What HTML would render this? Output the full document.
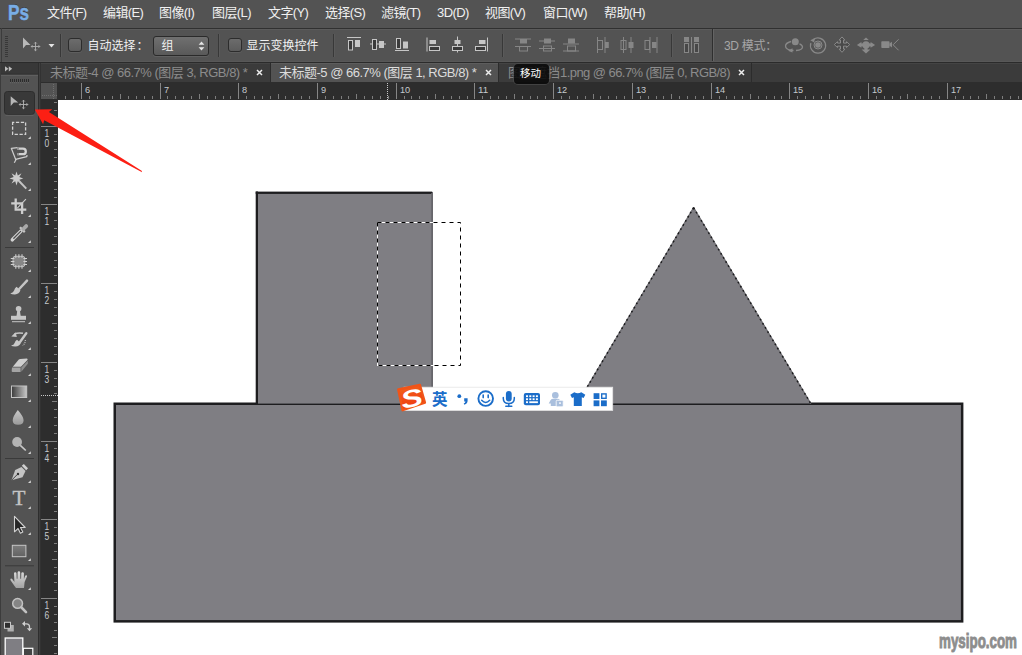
<!DOCTYPE html>
<html lang="zh-CN">
<head>
<meta charset="utf-8">
<title>Photoshop</title>
<style>
html,body{margin:0;padding:0;overflow:hidden;}
body{width:1022px;height:655px;overflow:hidden;position:relative;background:#535353;
 font-family:"Liberation Sans","Noto Sans CJK SC",sans-serif;color:#dcdcdc;}
.abs{position:absolute;}
svg{position:absolute;overflow:visible;}
#menubar{left:0;top:0;width:1022px;height:28px;background:#535353;}
#menubar .mi{position:absolute;top:0;height:27px;line-height:26px;font-size:13px;color:#f0f0f0;white-space:nowrap;letter-spacing:-0.6px;}
#ps{position:absolute;left:7.700px;top:-2.400px;font-size:22px;font-weight:bold;color:#78aee6;-webkit-text-stroke:0.500px #78aee6;line-height:30px;transform:scaleX(0.780);transform-origin:0 0;text-shadow:0 -1px 0 rgba(40,40,40,0.550);}
#optbar{left:0;top:28px;width:1022px;height:35px;background:#535353;}
.lbl{position:absolute;font-size:12px;line-height:16px;color:#f0f0f0;white-space:nowrap;letter-spacing:0;}
.cb{position:absolute;width:12px;height:12px;border:1px solid #2c2c2c;border-radius:3px;background:linear-gradient(#6c6c6c,#5c5c5c);box-shadow:0 1px 0 #5e5e5e;}
.vsep{position:absolute;width:1px;background:#383838;box-shadow:1px 0 0 #5a5a5a;}
#tabbar{left:41px;top:63px;width:981px;height:19px;background:#3b3b3b;box-shadow:inset 0 1px 0 #444;}
.tab{position:absolute;top:0;height:19px;line-height:19px;font-size:13px;color:#8c8c8c;white-space:nowrap;letter-spacing:-0.5px;background:#3b3b3b;box-shadow:inset 0 1px 0 #444;border-right:1px solid #2c2c2c;}
.tab.act{background:#535353;color:#dcdcdc;box-shadow:inset 0 1px 0 #5d5d5d;}
.tab .tt{position:absolute;left:9px;top:0;}
.tab svg.x{top:6px;stroke:#ececec;stroke-width:1.500;fill:none;}
#tip{left:514px;top:64px;width:35px;height:20px;background:rgba(8,8,8,0.860);border-radius:4px;box-shadow:0 0 0 1px rgba(75,75,75,0.700);color:#fff;font-size:10.500px;line-height:19px;text-align:center;text-indent:-2px;z-index:5;}
#hruler{left:41px;top:82px;width:981px;height:18px;background:#2d2d2d;overflow:hidden;}
#vruler{left:41px;top:99px;width:17px;height:556px;background:#2d2d2d;overflow:hidden;}
#canvas{left:58px;top:100px;width:964px;height:555px;background:#fff;overflow:hidden;}
#toolbar{left:0;top:63px;width:41px;height:592px;background:#535353;}
.rnv{font-family:"Liberation Sans",sans-serif;font-size:10px;fill:#c6cace;}
.rnum{font-family:"Liberation Sans",sans-serif;font-size:9.300px;fill:#c6cace;}
</style>
</head>
<body>
<!-- MENU BAR -->
<div id="menubar" class="abs">
  <div id="ps">Ps</div>
  <div class="mi" style="left:47px">文件(F)</div>
  <div class="mi" style="left:103px">编辑(E)</div>
  <div class="mi" style="left:159px">图像(I)</div>
  <div class="mi" style="left:212px">图层(L)</div>
  <div class="mi" style="left:268px">文字(Y)</div>
  <div class="mi" style="left:325px">选择(S)</div>
  <div class="mi" style="left:381px">滤镜(T)</div>
  <div class="mi" style="left:437px">3D(D)</div>
  <div class="mi" style="left:485px">视图(V)</div>
  <div class="mi" style="left:543px">窗口(W)</div>
  <div class="mi" style="left:604px">帮助(H)</div>
</div>
<!-- OPTIONS BAR -->
<div id="optbar" class="abs">
  <div class="abs" style="left:0;top:0;width:1022px;height:1px;background:#303030"></div><div class="abs" style="left:2px;top:1px;width:1020px;height:1px;background:#5b5b5b"></div>
  <div class="abs" style="left:1px;top:0;width:1px;height:34px;background:#3c3c3c"></div>
  <div class="abs" style="left:2px;top:33px;width:1020px;height:1px;background:#585858"></div><div class="abs" style="left:0;top:34px;width:1022px;height:1px;background:#2b2b2b"></div>
  <div class="cb" style="left:68px;top:10px"></div>
  <div class="lbl" style="left:87.500px;top:10px">自动选择<span style="margin-left:1px">：</span></div>
  <div class="abs" style="left:153px;top:8px;width:54px;height:18px;border:1px solid #2a2a2a;border-radius:3px;background:linear-gradient(#707070,#595959);box-shadow:0 1px 0 #606060;"></div>
  <div class="lbl" style="left:161.500px;top:10px">组</div>
  <div class="cb" style="left:228px;top:10px"></div>
  <div class="lbl" style="left:246.500px;top:10px">显示变换控件</div>
  <div class="lbl" style="left:724px;top:10px;color:#a6a6a6;font-size:12px;letter-spacing:-0.3px">3D 模式：</div>
  <div class="vsep" style="left:60px;top:6px;height:23px"></div>
  <div class="vsep" style="left:218px;top:6px;height:23px"></div>
  <div class="vsep" style="left:333px;top:6px;height:23px"></div>
  <div class="vsep" style="left:502px;top:6px;height:23px"></div>
  <div class="vsep" style="left:671px;top:6px;height:23px"></div>
  <div class="vsep" style="left:712px;top:1px;height:32px;background:#2f2f2f;box-shadow:1px 0 0 #646464"></div>
  <svg width="1022" height="35" viewBox="0 28 1022 35" style="left:0;top:0">
    <!-- gripper -->
    <g stroke="#383838" stroke-width="1">
      <path d="M5 36.5h3M5 38.5h3M5 40.5h3M5 42.5h3M5 44.5h3M5 46.5h3M5 48.5h3M5 50.5h3M5 52.5h3M5 54.5h3M5 56.5h3"/>
    </g>
    <!-- move tool icon -->
    <path d="M23 37.5V48.5L26 45H30.5Z" fill="#b9b9b9"/>
    <g fill="none" stroke="#b2b2b2" stroke-width="0.900">
      <path d="M35.5 42.2v8.600M31.2 46.5h8.600"/>
      <path d="M34.2 43.5l1.300-1.300 1.300 1.300M34.200 49.500l1.300 1.300 1.300-1.300M32.500 45.200l-1.300 1.300 1.300 1.300M38.500 45.200l1.300 1.300-1.300 1.300" stroke-width="0.900"/>
    </g>
    <path d="M48.5 44h6l-3 3.6z" fill="#e4e4e4"/>
    <!-- select arrows -->
    <path d="M198.6 44.8l2.9-3.3 2.9 3.3zM198.6 47.2l2.9 3.3 2.9-3.3z" fill="#e6e6e6"/>
    <!-- align icons -->
    <g fill="#c6c6c6" stroke="none">
      <rect x="347" y="37" width="14" height="1"/>
      <rect x="355" y="40" width="5" height="7"/>
      <rect x="370" y="43.5" width="16" height="1"/>
      <rect x="379" y="41" width="5" height="7"/>
      <rect x="395" y="50" width="14" height="1"/>
      <rect x="403" y="41.5" width="5" height="7"/>
      <rect x="426.5" y="37.5" width="1" height="14"/>
      <rect x="429.5" y="40" width="6.5" height="4"/>
      <rect x="457" y="36.5" width="1" height="16"/>
      <rect x="454.5" y="40" width="6" height="4"/>
      <rect x="487" y="37.5" width="1" height="14"/>
      <rect x="479" y="40" width="6.5" height="4"/>
    </g>
    <g fill="#3a3a3a" stroke="#c6c6c6" stroke-width="1">
      <rect x="348.5" y="40.500" width="4" height="9.5"/>
      <rect x="372.500" y="39.500" width="4" height="10"/>
      <rect x="396.500" y="38.500" width="4" height="10"/>
      <rect x="429.500" y="46.500" width="10" height="4"/>
      <rect x="452.500" y="46.500" width="10" height="4"/>
      <rect x="475.500" y="46.500" width="10" height="4"/>
    </g>
    <!-- distribute icons (disabled) -->
    <g fill="#868686" stroke="none">
      <rect x="515" y="38.5" width="16" height="1"/>
      <rect x="520" y="39" width="7" height="4.5"/>
      <rect x="515" y="46" width="16" height="1"/>
      <rect x="539" y="40.5" width="16" height="1"/>
      <rect x="544" y="38.5" width="7" height="5"/>
      <rect x="539" y="48" width="16" height="1"/>
      <rect x="563" y="43.5" width="16" height="1"/>
      <rect x="568" y="38.5" width="7" height="5"/>
      <rect x="563" y="50.5" width="16" height="1"/>
      <rect x="597" y="37" width="1" height="16"/>
      <rect x="604.5" y="37" width="1" height="16"/>
      <rect x="605" y="42" width="3.800" height="6"/>
      <rect x="623" y="37" width="1" height="16"/>
      <rect x="630.5" y="37" width="1" height="16"/>
      <rect x="628.5" y="42" width="5" height="6"/>
      <rect x="649.5" y="37" width="1" height="16"/>
      <rect x="656.5" y="37" width="1" height="16"/>
      <rect x="652" y="42" width="4.500" height="6"/>
      <rect x="684" y="37" width="5" height="5"/>
      <rect x="694" y="37" width="5" height="5"/>
      <rect x="691" y="37" width="1" height="16"/>
    </g>
    <g fill="none" stroke="#868686" stroke-width="1">
      <rect x="519.500" y="46.500" width="8" height="4.500"/>
      <rect x="543.500" y="46" width="8" height="5"/>
      <rect x="567.500" y="46" width="8" height="5"/>
      <rect x="597.500" y="40.500" width="5" height="9"/>
      <rect x="621" y="40.500" width="5" height="9"/>
      <rect x="645" y="40.500" width="4.500" height="9"/>
      <rect x="684.500" y="43.500" width="4" height="9" fill="#474747"/>
      <rect x="694.500" y="43.500" width="4" height="9" fill="#474747"/>
    </g>
    <!-- 3D mode icons (disabled) -->
    <g fill="none" stroke="#898989" stroke-width="1.300">
      <path d="M791 41.500q-5.500 1.500-5.500 4.500 0 4 8 4.500M796 50.500q6.500-.5 6.500-3.500 0-2-3-3.200"/>
      <path d="M813.500 39.500a7.600 7.600 0 1 1-2.600 3.500" stroke-width="1.200"/>
      <circle cx="818" cy="45" r="4" stroke-width="1"/>
      <path d="M842.0 36.9L844.9 40.1L843.5 40.1L843.5 43.1L846.5 43.1L846.5 41.7L849.7 44.6L846.5 47.5L846.5 46.1L843.5 46.1L843.5 49.1L844.9 49.1L842.0 52.3L839.1 49.1L840.5 49.1L840.5 46.1L837.5 46.1L837.5 47.5L834.3 44.6L837.5 41.7L837.5 43.1L840.5 43.1L840.5 40.1L839.1 40.1Z" stroke-width="1" fill="#494949" stroke-linejoin="round"/>
      <path d="M898.600 39.300l-5.500 5.500 5.500 5.500" stroke-width="1"/>
    </g>
    <g fill="#898989" stroke="none">
      <circle cx="795.300" cy="41.800" r="3.500"/>
      <path d="M788 50.800l4.500-2.600v4.300z"/>
      <path d="M810.300 40.300l4.700-2.300-.8 4.600z"/>
      <circle cx="818" cy="45" r="2.800"/>
      <circle cx="866" cy="44.900" r="3.600"/>
      <path d="M866 37.500l2.800 2.600h-5.600zM866 53.600l4.400-4h-8.800zM856.900 44.900l4.500-2.900v5.800zM875.100 44.900l-4.500-2.900v5.800z"/>
      <rect x="861" y="43.400" width="10" height="3"/>
      <rect x="864.500" y="46" width="3" height="4"/>
      <rect x="881.300" y="41.200" width="8.200" height="6.800" rx="0.800"/>
      <path d="M889.500 43.600l2.500-1.800v5.800l-2.500-1.800z"/>
    </g>
  </svg>
</div>
<!-- TAB BAR -->
<div id="tabbar" class="abs">
  <div class="tab" style="left:0;width:229px;"><span class="tt" style="left:9px">未标题-4 @ 66.7% (图层 3, RGB/8) *</span><svg class="x" style="left:215px" width="7" height="7" viewBox="0 0 7 7"><path d="M1 1L6 6M6 1L1 6"/></svg></div>
  <div class="tab act" style="left:230px;width:227px;"><span class="tt" style="left:8px">未标题-5 @ 66.7% (图层 1, RGB/8) *</span><svg class="x" style="left:214px" width="7" height="7" viewBox="0 0 7 7"><path d="M1 1L6 6M6 1L1 6"/></svg></div>
  <div class="tab" style="left:458px;width:252px;"><span class="tt" style="left:9px;letter-spacing:-0.560px"><span style="letter-spacing:0">图层遮挡</span>1.png @ 66.7% (图层 0, RGB/8)</span><svg class="x" style="left:239px" width="7" height="7" viewBox="0 0 7 7"><path d="M1 1L6 6M6 1L1 6"/></svg></div>
</div>
<div class="abs" id="tip">移动</div>
<!-- RULERS -->
<div id="hruler" class="abs"><svg width="981" height="18" viewBox="41 82 981 18" style="left:0;top:0">
<text class="rnum" x="85" y="92.900" textLength="5.1" lengthAdjust="spacingAndGlyphs">6</text>
<text class="rnum" x="164" y="92.900" textLength="5.1" lengthAdjust="spacingAndGlyphs">7</text>
<text class="rnum" x="242" y="92.900" textLength="5.1" lengthAdjust="spacingAndGlyphs">8</text>
<text class="rnum" x="321" y="92.900" textLength="5.1" lengthAdjust="spacingAndGlyphs">9</text>
<text class="rnum" x="400" y="92.900" textLength="10.2" lengthAdjust="spacingAndGlyphs">10</text>
<text class="rnum" x="478" y="92.900" textLength="10.2" lengthAdjust="spacingAndGlyphs">11</text>
<text class="rnum" x="557" y="92.900" textLength="10.2" lengthAdjust="spacingAndGlyphs">12</text>
<text class="rnum" x="636" y="92.900" textLength="10.2" lengthAdjust="spacingAndGlyphs">13</text>
<text class="rnum" x="715" y="92.900" textLength="10.2" lengthAdjust="spacingAndGlyphs">14</text>
<text class="rnum" x="793" y="92.900" textLength="10.2" lengthAdjust="spacingAndGlyphs">15</text>
<text class="rnum" x="872" y="92.900" textLength="10.2" lengthAdjust="spacingAndGlyphs">16</text>
<text class="rnum" x="951" y="92.900" textLength="10.2" lengthAdjust="spacingAndGlyphs">17</text>
<rect x="65" y="96" width="1" height="3" fill="#7e7e7e"/>
<rect x="73" y="96" width="1" height="3" fill="#7e7e7e"/>
<rect x="81" y="83" width="1" height="16" fill="#868686"/>
<rect x="89" y="96" width="1" height="3" fill="#7e7e7e"/>
<rect x="97" y="96" width="1" height="3" fill="#7e7e7e"/>
<rect x="104" y="96" width="1" height="3" fill="#7e7e7e"/>
<rect x="112" y="96" width="1" height="3" fill="#7e7e7e"/>
<rect x="120" y="94" width="1" height="5" fill="#7e7e7e"/>
<rect x="128" y="96" width="1" height="3" fill="#7e7e7e"/>
<rect x="136" y="96" width="1" height="3" fill="#7e7e7e"/>
<rect x="144" y="96" width="1" height="3" fill="#7e7e7e"/>
<rect x="152" y="96" width="1" height="3" fill="#7e7e7e"/>
<rect x="160" y="83" width="1" height="16" fill="#868686"/>
<rect x="167" y="96" width="1" height="3" fill="#7e7e7e"/>
<rect x="175" y="96" width="1" height="3" fill="#7e7e7e"/>
<rect x="183" y="96" width="1" height="3" fill="#7e7e7e"/>
<rect x="191" y="96" width="1" height="3" fill="#7e7e7e"/>
<rect x="199" y="94" width="1" height="5" fill="#7e7e7e"/>
<rect x="207" y="96" width="1" height="3" fill="#7e7e7e"/>
<rect x="215" y="96" width="1" height="3" fill="#7e7e7e"/>
<rect x="223" y="96" width="1" height="3" fill="#7e7e7e"/>
<rect x="230" y="96" width="1" height="3" fill="#7e7e7e"/>
<rect x="238" y="83" width="1" height="16" fill="#868686"/>
<rect x="246" y="96" width="1" height="3" fill="#7e7e7e"/>
<rect x="254" y="96" width="1" height="3" fill="#7e7e7e"/>
<rect x="262" y="96" width="1" height="3" fill="#7e7e7e"/>
<rect x="270" y="96" width="1" height="3" fill="#7e7e7e"/>
<rect x="278" y="94" width="1" height="5" fill="#7e7e7e"/>
<rect x="285" y="96" width="1" height="3" fill="#7e7e7e"/>
<rect x="293" y="96" width="1" height="3" fill="#7e7e7e"/>
<rect x="301" y="96" width="1" height="3" fill="#7e7e7e"/>
<rect x="309" y="96" width="1" height="3" fill="#7e7e7e"/>
<rect x="317" y="83" width="1" height="16" fill="#868686"/>
<rect x="325" y="96" width="1" height="3" fill="#7e7e7e"/>
<rect x="333" y="96" width="1" height="3" fill="#7e7e7e"/>
<rect x="341" y="96" width="1" height="3" fill="#7e7e7e"/>
<rect x="348" y="96" width="1" height="3" fill="#7e7e7e"/>
<rect x="356" y="94" width="1" height="5" fill="#7e7e7e"/>
<rect x="364" y="96" width="1" height="3" fill="#7e7e7e"/>
<rect x="372" y="96" width="1" height="3" fill="#7e7e7e"/>
<rect x="380" y="96" width="1" height="3" fill="#7e7e7e"/>
<rect x="388" y="96" width="1" height="3" fill="#7e7e7e"/>
<rect x="396" y="83" width="1" height="16" fill="#868686"/>
<rect x="404" y="96" width="1" height="3" fill="#7e7e7e"/>
<rect x="411" y="96" width="1" height="3" fill="#7e7e7e"/>
<rect x="419" y="96" width="1" height="3" fill="#7e7e7e"/>
<rect x="427" y="96" width="1" height="3" fill="#7e7e7e"/>
<rect x="435" y="94" width="1" height="5" fill="#7e7e7e"/>
<rect x="443" y="96" width="1" height="3" fill="#7e7e7e"/>
<rect x="451" y="96" width="1" height="3" fill="#7e7e7e"/>
<rect x="459" y="96" width="1" height="3" fill="#7e7e7e"/>
<rect x="467" y="96" width="1" height="3" fill="#7e7e7e"/>
<rect x="474" y="83" width="1" height="16" fill="#868686"/>
<rect x="482" y="96" width="1" height="3" fill="#7e7e7e"/>
<rect x="490" y="96" width="1" height="3" fill="#7e7e7e"/>
<rect x="498" y="96" width="1" height="3" fill="#7e7e7e"/>
<rect x="506" y="96" width="1" height="3" fill="#7e7e7e"/>
<rect x="514" y="94" width="1" height="5" fill="#7e7e7e"/>
<rect x="522" y="96" width="1" height="3" fill="#7e7e7e"/>
<rect x="530" y="96" width="1" height="3" fill="#7e7e7e"/>
<rect x="537" y="96" width="1" height="3" fill="#7e7e7e"/>
<rect x="545" y="96" width="1" height="3" fill="#7e7e7e"/>
<rect x="553" y="83" width="1" height="16" fill="#868686"/>
<rect x="561" y="96" width="1" height="3" fill="#7e7e7e"/>
<rect x="569" y="96" width="1" height="3" fill="#7e7e7e"/>
<rect x="577" y="96" width="1" height="3" fill="#7e7e7e"/>
<rect x="585" y="96" width="1" height="3" fill="#7e7e7e"/>
<rect x="593" y="94" width="1" height="5" fill="#7e7e7e"/>
<rect x="600" y="96" width="1" height="3" fill="#7e7e7e"/>
<rect x="608" y="96" width="1" height="3" fill="#7e7e7e"/>
<rect x="616" y="96" width="1" height="3" fill="#7e7e7e"/>
<rect x="624" y="96" width="1" height="3" fill="#7e7e7e"/>
<rect x="632" y="83" width="1" height="16" fill="#868686"/>
<rect x="640" y="96" width="1" height="3" fill="#7e7e7e"/>
<rect x="648" y="96" width="1" height="3" fill="#7e7e7e"/>
<rect x="656" y="96" width="1" height="3" fill="#7e7e7e"/>
<rect x="663" y="96" width="1" height="3" fill="#7e7e7e"/>
<rect x="671" y="94" width="1" height="5" fill="#7e7e7e"/>
<rect x="679" y="96" width="1" height="3" fill="#7e7e7e"/>
<rect x="687" y="96" width="1" height="3" fill="#7e7e7e"/>
<rect x="695" y="96" width="1" height="3" fill="#7e7e7e"/>
<rect x="703" y="96" width="1" height="3" fill="#7e7e7e"/>
<rect x="711" y="83" width="1" height="16" fill="#868686"/>
<rect x="719" y="96" width="1" height="3" fill="#7e7e7e"/>
<rect x="726" y="96" width="1" height="3" fill="#7e7e7e"/>
<rect x="734" y="96" width="1" height="3" fill="#7e7e7e"/>
<rect x="742" y="96" width="1" height="3" fill="#7e7e7e"/>
<rect x="750" y="94" width="1" height="5" fill="#7e7e7e"/>
<rect x="758" y="96" width="1" height="3" fill="#7e7e7e"/>
<rect x="766" y="96" width="1" height="3" fill="#7e7e7e"/>
<rect x="774" y="96" width="1" height="3" fill="#7e7e7e"/>
<rect x="781" y="96" width="1" height="3" fill="#7e7e7e"/>
<rect x="789" y="83" width="1" height="16" fill="#868686"/>
<rect x="797" y="96" width="1" height="3" fill="#7e7e7e"/>
<rect x="805" y="96" width="1" height="3" fill="#7e7e7e"/>
<rect x="813" y="96" width="1" height="3" fill="#7e7e7e"/>
<rect x="821" y="96" width="1" height="3" fill="#7e7e7e"/>
<rect x="829" y="94" width="1" height="5" fill="#7e7e7e"/>
<rect x="837" y="96" width="1" height="3" fill="#7e7e7e"/>
<rect x="844" y="96" width="1" height="3" fill="#7e7e7e"/>
<rect x="852" y="96" width="1" height="3" fill="#7e7e7e"/>
<rect x="860" y="96" width="1" height="3" fill="#7e7e7e"/>
<rect x="868" y="83" width="1" height="16" fill="#868686"/>
<rect x="876" y="96" width="1" height="3" fill="#7e7e7e"/>
<rect x="884" y="96" width="1" height="3" fill="#7e7e7e"/>
<rect x="892" y="96" width="1" height="3" fill="#7e7e7e"/>
<rect x="900" y="96" width="1" height="3" fill="#7e7e7e"/>
<rect x="907" y="94" width="1" height="5" fill="#7e7e7e"/>
<rect x="915" y="96" width="1" height="3" fill="#7e7e7e"/>
<rect x="923" y="96" width="1" height="3" fill="#7e7e7e"/>
<rect x="931" y="96" width="1" height="3" fill="#7e7e7e"/>
<rect x="939" y="96" width="1" height="3" fill="#7e7e7e"/>
<rect x="947" y="83" width="1" height="16" fill="#868686"/>
<rect x="955" y="96" width="1" height="3" fill="#7e7e7e"/>
<rect x="963" y="96" width="1" height="3" fill="#7e7e7e"/>
<rect x="970" y="96" width="1" height="3" fill="#7e7e7e"/>
<rect x="978" y="96" width="1" height="3" fill="#7e7e7e"/>
<rect x="986" y="94" width="1" height="5" fill="#7e7e7e"/>
<rect x="994" y="96" width="1" height="3" fill="#7e7e7e"/>
<rect x="1002" y="96" width="1" height="3" fill="#7e7e7e"/>
<rect x="1010" y="96" width="1" height="3" fill="#7e7e7e"/>
<rect x="1018" y="96" width="1" height="3" fill="#7e7e7e"/>
<rect x="41" y="83" width="16" height="16" fill="#535353"/>
<path d="M42 95.500h15M53.500 84v15" stroke="#6e6e6e" stroke-width="1" stroke-dasharray="1 1" fill="none"/>
<path d="M387.500 83v17" stroke="#c8c8c8" stroke-width="1" stroke-dasharray="1 1" fill="none"/>
</svg></div>
<div id="vruler" class="abs"><svg width="17" height="556" viewBox="41 99 17 556" style="left:0;top:0">
<text class="rnv" x="44.500" y="137.4" textLength="4.700" lengthAdjust="spacingAndGlyphs">1</text>
<text class="rnv" x="44.500" y="147.4" textLength="4.700" lengthAdjust="spacingAndGlyphs">0</text>
<text class="rnv" x="44.500" y="215.4" textLength="4.700" lengthAdjust="spacingAndGlyphs">1</text>
<text class="rnv" x="44.500" y="225.4" textLength="4.700" lengthAdjust="spacingAndGlyphs">1</text>
<text class="rnv" x="44.500" y="294.4" textLength="4.700" lengthAdjust="spacingAndGlyphs">1</text>
<text class="rnv" x="44.500" y="304.4" textLength="4.700" lengthAdjust="spacingAndGlyphs">2</text>
<text class="rnv" x="44.500" y="373.4" textLength="4.700" lengthAdjust="spacingAndGlyphs">1</text>
<text class="rnv" x="44.500" y="383.4" textLength="4.700" lengthAdjust="spacingAndGlyphs">3</text>
<text class="rnv" x="44.500" y="452.4" textLength="4.700" lengthAdjust="spacingAndGlyphs">1</text>
<text class="rnv" x="44.500" y="462.4" textLength="4.700" lengthAdjust="spacingAndGlyphs">4</text>
<text class="rnv" x="44.500" y="530.4" textLength="4.700" lengthAdjust="spacingAndGlyphs">1</text>
<text class="rnv" x="44.500" y="540.4" textLength="4.700" lengthAdjust="spacingAndGlyphs">5</text>
<text class="rnv" x="44.500" y="609.4" textLength="4.700" lengthAdjust="spacingAndGlyphs">1</text>
<text class="rnv" x="44.500" y="619.4" textLength="4.700" lengthAdjust="spacingAndGlyphs">6</text>
<rect x="54" y="102" width="3" height="1" fill="#7e7e7e"/>
<rect x="54" y="110" width="3" height="1" fill="#7e7e7e"/>
<rect x="54" y="118" width="3" height="1" fill="#7e7e7e"/>
<rect x="41" y="126" width="16" height="1" fill="#868686"/>
<rect x="54" y="134" width="3" height="1" fill="#7e7e7e"/>
<rect x="54" y="141" width="3" height="1" fill="#7e7e7e"/>
<rect x="54" y="149" width="3" height="1" fill="#7e7e7e"/>
<rect x="54" y="157" width="3" height="1" fill="#7e7e7e"/>
<rect x="52" y="165" width="5" height="1" fill="#7e7e7e"/>
<rect x="54" y="173" width="3" height="1" fill="#7e7e7e"/>
<rect x="54" y="181" width="3" height="1" fill="#7e7e7e"/>
<rect x="54" y="189" width="3" height="1" fill="#7e7e7e"/>
<rect x="54" y="197" width="3" height="1" fill="#7e7e7e"/>
<rect x="41" y="204" width="16" height="1" fill="#868686"/>
<rect x="54" y="212" width="3" height="1" fill="#7e7e7e"/>
<rect x="54" y="220" width="3" height="1" fill="#7e7e7e"/>
<rect x="54" y="228" width="3" height="1" fill="#7e7e7e"/>
<rect x="54" y="236" width="3" height="1" fill="#7e7e7e"/>
<rect x="52" y="244" width="5" height="1" fill="#7e7e7e"/>
<rect x="54" y="252" width="3" height="1" fill="#7e7e7e"/>
<rect x="54" y="260" width="3" height="1" fill="#7e7e7e"/>
<rect x="54" y="267" width="3" height="1" fill="#7e7e7e"/>
<rect x="54" y="275" width="3" height="1" fill="#7e7e7e"/>
<rect x="41" y="283" width="16" height="1" fill="#868686"/>
<rect x="54" y="291" width="3" height="1" fill="#7e7e7e"/>
<rect x="54" y="299" width="3" height="1" fill="#7e7e7e"/>
<rect x="54" y="307" width="3" height="1" fill="#7e7e7e"/>
<rect x="54" y="315" width="3" height="1" fill="#7e7e7e"/>
<rect x="52" y="323" width="5" height="1" fill="#7e7e7e"/>
<rect x="54" y="330" width="3" height="1" fill="#7e7e7e"/>
<rect x="54" y="338" width="3" height="1" fill="#7e7e7e"/>
<rect x="54" y="346" width="3" height="1" fill="#7e7e7e"/>
<rect x="54" y="354" width="3" height="1" fill="#7e7e7e"/>
<rect x="41" y="362" width="16" height="1" fill="#868686"/>
<rect x="54" y="370" width="3" height="1" fill="#7e7e7e"/>
<rect x="54" y="378" width="3" height="1" fill="#7e7e7e"/>
<rect x="54" y="386" width="3" height="1" fill="#7e7e7e"/>
<rect x="54" y="393" width="3" height="1" fill="#7e7e7e"/>
<rect x="52" y="401" width="5" height="1" fill="#7e7e7e"/>
<rect x="54" y="409" width="3" height="1" fill="#7e7e7e"/>
<rect x="54" y="417" width="3" height="1" fill="#7e7e7e"/>
<rect x="54" y="425" width="3" height="1" fill="#7e7e7e"/>
<rect x="54" y="433" width="3" height="1" fill="#7e7e7e"/>
<rect x="41" y="441" width="16" height="1" fill="#868686"/>
<rect x="54" y="448" width="3" height="1" fill="#7e7e7e"/>
<rect x="54" y="456" width="3" height="1" fill="#7e7e7e"/>
<rect x="54" y="464" width="3" height="1" fill="#7e7e7e"/>
<rect x="54" y="472" width="3" height="1" fill="#7e7e7e"/>
<rect x="52" y="480" width="5" height="1" fill="#7e7e7e"/>
<rect x="54" y="488" width="3" height="1" fill="#7e7e7e"/>
<rect x="54" y="496" width="3" height="1" fill="#7e7e7e"/>
<rect x="54" y="504" width="3" height="1" fill="#7e7e7e"/>
<rect x="54" y="511" width="3" height="1" fill="#7e7e7e"/>
<rect x="41" y="519" width="16" height="1" fill="#868686"/>
<rect x="54" y="527" width="3" height="1" fill="#7e7e7e"/>
<rect x="54" y="535" width="3" height="1" fill="#7e7e7e"/>
<rect x="54" y="543" width="3" height="1" fill="#7e7e7e"/>
<rect x="54" y="551" width="3" height="1" fill="#7e7e7e"/>
<rect x="52" y="559" width="5" height="1" fill="#7e7e7e"/>
<rect x="54" y="567" width="3" height="1" fill="#7e7e7e"/>
<rect x="54" y="574" width="3" height="1" fill="#7e7e7e"/>
<rect x="54" y="582" width="3" height="1" fill="#7e7e7e"/>
<rect x="54" y="590" width="3" height="1" fill="#7e7e7e"/>
<rect x="41" y="598" width="16" height="1" fill="#868686"/>
<rect x="54" y="606" width="3" height="1" fill="#7e7e7e"/>
<rect x="54" y="614" width="3" height="1" fill="#7e7e7e"/>
<rect x="54" y="622" width="3" height="1" fill="#7e7e7e"/>
<rect x="54" y="630" width="3" height="1" fill="#7e7e7e"/>
<rect x="52" y="637" width="5" height="1" fill="#7e7e7e"/>
<rect x="54" y="645" width="3" height="1" fill="#7e7e7e"/>
<rect x="54" y="653" width="3" height="1" fill="#7e7e7e"/>
<path d="M41 395.500h17" stroke="#c8c8c8" stroke-width="1" stroke-dasharray="1 1" fill="none"/>
</svg></div>
<!-- CANVAS -->
<div id="canvas" class="abs">
<svg width="964" height="555" viewBox="58 100 964 555" style="left:0;top:0">
  <!-- big rectangle -->
  <rect x="114.750" y="403.750" width="847.400" height="217.600" fill="#7f7e83" stroke="#1d1d1f" stroke-width="2.500"/>
  <!-- tall rectangle -->
  <rect x="256" y="192" width="177" height="211.600" fill="#7f7e83"/>
  <rect x="255.700" y="191.500" width="2.300" height="212.500" fill="#1d1d1f"/>
  <rect x="255.700" y="191.600" width="176.500" height="2.300" fill="#1d1d1f"/>
  <rect x="431.200" y="193" width="1.800" height="210.600" fill="#67666b"/>
  <!-- triangle -->
  <path d="M693.600 207.700L810.800 403.600H577.400Z" fill="#7f7e83"/>
  <path d="M577.400 403.600L693.600 207.700L810.800 403.600" fill="none" stroke="#6f6e73" stroke-width="1.300" stroke-linejoin="round"/>
  <path d="M693.600 207.700L577.400 403.600M693.600 207.700L810.800 403.600" fill="none" stroke="#1a1a1c" stroke-width="1.500" stroke-dasharray="1.800 3"/>
  <!-- marquee selection -->
  <rect x="377.500" y="222.500" width="83" height="143" fill="none" stroke="#fff" stroke-width="1"/>
  <rect x="377.500" y="222.500" width="83" height="143" fill="none" stroke="#000" stroke-width="1" stroke-dasharray="4 4"/>
  <!-- watermark -->
  <text x="939" y="648" font-family="'Liberation Sans',sans-serif" font-weight="bold" font-size="21" fill="#8d8d8d" stroke="#8d8d8d" stroke-width="1" textLength="78" lengthAdjust="spacingAndGlyphs">mysipo.com</text>
</svg>
<!-- IME BAR -->
<svg width="230" height="40" viewBox="390 378 230 40" style="left:332px;top:278px">
  <defs><linearGradient id="sg" x1="0" y1="0" x2="0.300" y2="1"><stop offset="0" stop-color="#f4661c"/><stop offset="1" stop-color="#ee3a10"/></linearGradient></defs>
  <rect x="404" y="387.200" width="208.700" height="23.200" fill="#fff" stroke="#e4e4e4" stroke-width="0.800"/>
  <path d="M398.300 389.500L419.900 385L424.900 402.700L402.600 410.200Z" fill="url(#sg)" stroke="#f15418" stroke-width="2.400" stroke-linejoin="round"/>
  <g transform="rotate(-13 411.500 397.500)">
    <text x="400.500" y="406.800" font-family="'Liberation Sans',sans-serif" font-weight="bold" font-style="italic" font-size="24" fill="#fff" textLength="22" lengthAdjust="spacingAndGlyphs">S</text>
  </g>
  <text x="432" y="404.500" font-family="'Liberation Sans','Noto Sans CJK SC',sans-serif" font-weight="bold" font-size="15.500" fill="#1b6dc9">英</text>
  <circle cx="459.300" cy="396.200" r="1.900" fill="#1b6dc9"/>
  <path d="M464.200 398.200h3.400v2.600q0 2.800-3.200 4l-.7-1.200q1.600-.8 1.800-2.200h-1.300z" fill="#1b6dc9"/>
  <!-- smiley -->
  <g fill="none" stroke="#1b6dc9" stroke-width="1.700" stroke-linecap="round">
    <circle cx="485.700" cy="398.600" r="7.300" stroke-width="1.900"/>
    <path d="M483.200 395v2.600M488.200 395v2.600" stroke-width="1.600"/>
    <path d="M481.700 400.300q4 4.400 8 0" stroke-width="1.500"/>
  </g>
  <!-- mic -->
  <rect x="505.900" y="391" width="5.800" height="10.500" rx="2.900" fill="#1b6dc9"/>
  <path d="M503.300 397.500v1q0 5 5.500 5t5.500-5v-1M508.800 403.500v3M505.800 406.300h6" fill="none" stroke="#1b6dc9" stroke-width="1.500" stroke-linecap="round"/>
  <!-- keyboard -->
  <rect x="523.800" y="393" width="16.200" height="12.200" rx="2" fill="#1b6dc9"/>
  <g fill="#fff">
    <rect x="526" y="395.300" width="2" height="1.800"/><rect x="529.300" y="395.300" width="2" height="1.800"/><rect x="532.600" y="395.300" width="2" height="1.800"/><rect x="535.900" y="395.300" width="2" height="1.800"/>
    <rect x="526" y="398.300" width="2" height="1.800"/><rect x="529.300" y="398.300" width="2" height="1.800"/><rect x="532.600" y="398.300" width="2" height="1.800"/><rect x="535.900" y="398.300" width="2" height="1.800"/>
    <rect x="526" y="401.300" width="2" height="1.800"/><rect x="529.300" y="401.300" width="8.600" height="1.800"/>
  </g>
  <!-- person (dim) -->
  <g fill="#a9bfdd">
    <circle cx="555.300" cy="395.300" r="3.300"/>
    <path d="M548.700 403.500l1.800-3.300q1-1.400 2.800-1.400h4q2 0 2.800 1.400l.5 5.800h-9.800v-2.500z"/>
    <rect x="556.200" y="400.300" width="7" height="6.500" rx="1" stroke="#fff" stroke-width="0.800"/>
    <rect x="559.200" y="402.300" width="1.600" height="1.600" fill="#fff"/>
  </g>
  <!-- t-shirt -->
  <path d="M574.300 392.200q3.500 2 7 0l4 2.600-1.700 3.300-1.800-.8v8.700h-8v-8.700l-1.800.8-1.700-3.300z" fill="#1b6dc9"/>
  <!-- grid -->
  <g fill="#1b6dc9">
    <rect x="593.600" y="393.200" width="5.800" height="5.800"/>
    <rect x="593.600" y="400.400" width="5.800" height="5.800"/>
    <rect x="601" y="400.400" width="5.800" height="5.800"/>
    <rect x="601.700" y="393.900" width="4.400" height="4.400" fill="#fff" stroke="#1b6dc9" stroke-width="1.400"/>
  </g>
</svg>
</div>
<!-- TOOLBAR -->
<div id="toolbar" class="abs">
<svg width="41" height="592" viewBox="0 63 41 592" style="left:0;top:0">
  <defs>
    <linearGradient id="gh" x1="0" y1="0" x2="1" y2="0"><stop offset="0" stop-color="#3a3a3a"/><stop offset="1" stop-color="#c8c8c8"/></linearGradient>
    <linearGradient id="gv" x1="0" y1="0" x2="0" y2="1"><stop offset="0" stop-color="#c8c8c8"/><stop offset="1" stop-color="#9a9a9a"/></linearGradient>
    <linearGradient id="gr" x1="0" y1="0" x2="0" y2="1"><stop offset="0" stop-color="#7c7c7c"/><stop offset="1" stop-color="#626262"/></linearGradient>
    <linearGradient id="gv2" x1="0" y1="0" x2="0" y2="1"><stop offset="0" stop-color="#dcdcdc"/><stop offset="1" stop-color="#a2a2a2"/></linearGradient>
    <path id="tri" d="M0 2.800L2.800 0V2.800Z" fill="#d6d6d6"/>
  </defs>
  <rect x="0" y="63" width="1" height="592" fill="#3c3c3c"/>
  <rect x="1" y="63" width="37" height="11" fill="#383838"/>
  <rect x="1" y="73.800" width="37" height="1" fill="#2e2e2e"/>
  <rect x="1" y="74.800" width="37" height="1" fill="#636363"/>
  <rect x="38" y="63" width="1.200" height="592" fill="#2e2e2e"/>
  <rect x="39.200" y="63" width="1" height="592" fill="#3e3e3e"/>
  <rect x="40.200" y="63" width="0.800" height="592" fill="#2c2c2c"/>
  <path d="M5 66.200l3.400 2.600L5 71.400zM8.800 66.200l3.400 2.600-3.400 2.600z" fill="#bcbcbc"/>
  <path d="M10.500 79v3.200M12.500 79v3.200M14.500 79v3.200M16.500 79v3.200M18.500 79v3.200M20.500 79v3.200M22.500 79v3.200M24.500 79v3.200M26.500 79v3.200M28.500 79v3.200" stroke="#2c2c2c" stroke-width="1" fill="none"/>
  <path d="M10 82.700h20" stroke="#727272" stroke-width="0.800" stroke-dasharray="1 1" fill="none"/>
  <!-- selected move tool -->
  <rect x="4.500" y="91.500" width="30" height="23" rx="3" fill="#393939" stroke="#2d2d2d" stroke-width="1"/>
  <path d="M5.500 115.300h28" stroke="#686868" stroke-width="0.800"/>
  <path d="M10.700 96.200V106L13.800 102.500H18.200Z" fill="#b6b6b6"/>
  <g fill="none" stroke="#b2b2b2" stroke-width="0.900">
    <path d="M23.500 100.200v8.600M19.200 104.500h8.600"/>
    <path d="M22.200 101.500l1.300-1.300 1.300 1.300M22.200 107.500l1.300 1.300 1.300-1.300M20.500 103.200l-1.300 1.300 1.300 1.300M26.500 103.200l1.300 1.300-1.300 1.300" stroke-width="0.900"/>
  </g>
  <!-- marquee -->
  <rect x="12.600" y="122.300" width="13" height="12" fill="none" stroke="#d2d2d2" stroke-width="1.300" stroke-dasharray="3.300 1.600" stroke-dashoffset="1.600"/>
  <use href="#tri" x="28" y="136.300"/>
  <!-- lasso -->
  <g fill="none" stroke="#cfcfcf" stroke-width="1.200" stroke-linejoin="round">
    <path d="M17.500 147.700L11.300 148.300L15.600 159.300L26.800 156.600L27 155"/>
    <path d="M16.300 159l-2 3.800"/>
    <path d="M17.300 148.600h5.700a2.800 2.800 0 0 1 0 5.600h-5.700" stroke-width="2.300" stroke="#d2d2d2"/>
    <path d="M17.300 148.600h1.600M17.300 154.200h1.600" stroke-width="2.300" stroke="#8c8c8c"/>
  </g>
  <use href="#tri" x="28" y="162.300"/>
  <!-- magic wand -->
  <path d="M16.500 171.500l1.300 4 3.700-2.200-2.200 3.700 4 1.400-4 1.300 2 3.500-3.500-2-1.300 4.300-1.300-4.300-3.700 2.200 2.200-3.700-4.200-1.300 4.200-1.400-2.200-3.700 3.700 2.200z" fill="#cdcdcd"/>
  <path d="M19 181l7.300 7.600" stroke="#c4c4c4" stroke-width="2" fill="none"/>
  <use href="#tri" x="28" y="188.300"/>
  <!-- crop -->
  <rect x="17" y="204.600" width="4" height="4" fill="#444"/>
  <g fill="none" stroke="#cdcdcd" stroke-width="2.300">
    <path d="M15.700 198.600V209.700H26.300M11.200 203.400H22.100V213.900"/>
    <path d="M17.300 208.200l8.600-9" stroke-width="1.100"/>
  </g>
  <use href="#tri" x="28" y="214.300"/>
  <!-- eyedropper -->
  <g stroke-linecap="round">
    <path d="M21 231L13.300 238.700L12.300 239.900" stroke="#d2d2d2" stroke-width="3.400" fill="none"/>
    <path d="M20.600 231.400L13.800 238.200" stroke="#4e4e4e" stroke-width="1.300" fill="none"/>
    <path d="M20 227.300l4.800 4.800" stroke="#c6c6c6" stroke-width="2.200" stroke-linecap="butt" fill="none"/>
    <path d="M23.300 229L26.200 226.100" stroke="#a9a9a9" stroke-width="3.800" fill="none"/>
  </g>
  <use href="#tri" x="28" y="240.300"/>
  <rect x="5" y="247" width="29" height="1" fill="#3a3a3a"/>
  <!-- healing / patch -->
  <rect x="13" y="256.300" width="11.800" height="10.400" rx="2.200" fill="#868686" stroke="#c4c4c4" stroke-width="0.900"/>
  <g stroke="#d0d0d0" stroke-width="1" fill="none">
    <path d="M15.800 254.200v3.600M18.900 254.200v3.600M22 254.200v3.600M15.800 265.200v3.600M18.900 265.200v3.600M22 265.200v3.600M10.800 258.500h3.600M10.800 261.500h3.600M10.800 264.500h3.600M23.400 258.500h3.600M23.400 261.500h3.600M23.400 264.500h3.600"/>
  </g>
  <use href="#tri" x="28" y="269.300"/>
  <!-- brush -->
  <path d="M27 280.600L19.200 289" stroke="#c4c4c4" stroke-width="2.500" stroke-linecap="round" fill="none"/>
  <path d="M16.600 286.800L20.400 290.300Q19.200 294 15 294.400Q12 294.500 10.300 293.400Q13.500 292.800 14.100 290.500Q14.800 287.800 16.600 286.800Z" fill="#c8c8c8"/>
  <use href="#tri" x="28" y="295.300"/>
  <!-- stamp -->
  <circle cx="18.600" cy="308.700" r="2.800" fill="#c6c6c6"/>
  <path d="M17.300 310.500h2.600l.8 5.500h-4.200z" fill="#c6c6c6"/>
  <rect x="11" y="315.800" width="15" height="4" fill="#c6c6c6"/>
  <rect x="12" y="321.200" width="13" height="1" fill="#c6c6c6"/>
  <use href="#tri" x="28" y="321.300"/>
  <!-- history brush -->
  <path d="M26.300 333.300L20 342" stroke="#c6c6c6" stroke-width="2.400" stroke-linecap="round" fill="none"/>
  <path d="M17 339.800L20.800 343Q19.500 346.300 15.500 346.600Q12.500 346.700 11 345.600Q14 345 14.600 343Q15.300 340.600 17 339.800Z" fill="#c8c8c8"/>
  <path d="M23 333.300q-4.500-1-8.500.6" stroke="#c6c6c6" stroke-width="1.500" fill="none"/>
  <path d="M11.300 336.600l4.300-4.300 1.200 4.600z" fill="#c6c6c6"/>
  <path d="M25.300 340q.3 3-2.600 5.600" stroke="#c6c6c6" stroke-width="1.100" stroke-dasharray="1 1" fill="none"/>
  <use href="#tri" x="28" y="347.300"/>
  <!-- eraser -->
  <path d="M12.800 366.800L18.800 359.600Q19.300 359 20.200 358.900L26.800 358.500Q28.200 358.600 27.400 360L21 366.800Z" fill="#cfcfcf"/>
  <path d="M12 367.600H20.600V372H12.600Q11.500 372 11.700 370.800Z" fill="#a4a4a4"/>
  <path d="M21.300 367.400L27.800 360.700V363.800L21.300 371.700Z" fill="#8c8c8c"/>
  <use href="#tri" x="28" y="373.300"/>
  <!-- gradient -->
  <rect x="11.500" y="386" width="15.200" height="11.500" fill="url(#gh)" stroke="#c4c4c4" stroke-width="1"/>
  <use href="#tri" x="28" y="399.300"/>
  <!-- blur drop -->
  <path d="M17.800 410q5.800 6.700 5.800 10.200 0 4.500-5.500 4.500t-5.400-4.500q0-3.500 5.100-10.200z" fill="url(#gv)"/>
  <use href="#tri" x="28" y="425.300"/>
  <!-- dodge -->
  <circle cx="17.100" cy="442" r="4.900" fill="#b4b4b4"/>
  <path d="M20.300 445.300l5.500 5.200" stroke="#c8c8c8" stroke-width="1.700" fill="none"/>
  <use href="#tri" x="28" y="451.300"/>
  <rect x="5" y="458" width="29" height="1" fill="#3a3a3a"/>
  <!-- pen -->
  <path d="M11.500 480.300l3.700-10.300 6.300-3 4 4-3 6.300z" fill="#c4c4c4"/>
  <path d="M11.500 480.300l6-6" stroke="#444" stroke-width="1" fill="none"/>
  <circle cx="18" cy="474" r="1.200" fill="#333"/>
  <path d="M21.800 465.800l2-1.800 4.200 4.200-1.800 2z" fill="#cfcfcf"/>
  <use href="#tri" x="28" y="480.300"/>
  <!-- type -->
  <text x="12.400" y="505" font-family="'Liberation Serif',serif" font-size="20.500" fill="#c4c4c4" stroke="#c4c4c4" stroke-width="0.350" textLength="13" lengthAdjust="spacingAndGlyphs">T</text>
  <use href="#tri" x="28" y="506.300"/>
  <!-- path selection -->
  <path d="M14.500 516.300v15.500l3.600-3.300 2.300 4.700 2.400-1.100-2.300-4.600h4.700z" fill="#262626" stroke="#d2d2d2" stroke-width="1.100" stroke-linejoin="round"/>
  <use href="#tri" x="28" y="532.300"/>
  <!-- rectangle -->
  <rect x="12.300" y="545.300" width="13.600" height="11.400" fill="url(#gr)" stroke="#c6c6c6" stroke-width="1"/>
  <use href="#tri" x="28" y="558.300"/>
  <rect x="5" y="565.300" width="29" height="1" fill="#3a3a3a"/>
  <!-- hand -->
  <path d="M16 588H24L24.600 582L27 576.600Q27.300 575.300 26.200 575.300Q25.300 575.300 24.900 576.500L23.900 579.200V573.300Q23.800 572.200 22.600 572.200Q21.400 572.200 21.300 573.300L21.100 578.800H20.300L20.200 572.400Q20.100 571.200 18.900 571.200Q17.700 571.200 17.600 572.400L17.500 578.800H16.700L16.500 573.400Q16.400 572.300 15.200 572.300Q14 572.300 14 573.500L14.400 582L12.200 579Q11.300 578.200 10.600 578.800Q10 579.500 10.700 580.600L14.500 586Q15.300 587 16 588Z" fill="url(#gv2)"/>
  <use href="#tri" x="28" y="587.300"/>
  <!-- zoom -->
  <circle cx="17.600" cy="603.400" r="4.900" fill="#858585" stroke="#c2c2c2" stroke-width="1.500"/>
  <path d="M21.500 607.500l4.500 4.600" stroke="#c2c2c2" stroke-width="2.600" stroke-linecap="round" fill="none"/>
  <!-- default colors -->
  <rect x="7.500" y="625" width="6.300" height="6.500" fill="#b0b0b0"/>
  <rect x="4.500" y="622.300" width="6" height="6" fill="#2e2e2e" stroke="#c8c8c8" stroke-width="1"/>
  <!-- swap arrow -->
  <path d="M24 623.800h2.500q3 0 3 3v2" fill="none" stroke="#d0d0d0" stroke-width="1.300"/>
  <path d="M22 623.800l3-2.700v5.400zM29.500 631.200l-2.700-3h5.400z" fill="#d0d0d0"/>
  <!-- fg/bg swatches -->
  <rect x="23.300" y="648.300" width="9.500" height="8" fill="#454545" stroke="#fff" stroke-width="1.200"/>
  <rect x="5.200" y="638" width="17.600" height="19" fill="#7f7e83" stroke="#fff" stroke-width="1.300"/>
</svg>
</div>
<!-- red arrow overlay -->
<svg width="130" height="90" viewBox="30 90 130 90" style="left:30px;top:90px;z-index:9">
  <path d="M34.800 109.500L52.300 109.300L48.900 111.900L141.600 170.800L142.100 172.300L44.200 120.200L43.100 124.300Z" fill="#fc1f14"/>
</svg>
</body>
</html>
